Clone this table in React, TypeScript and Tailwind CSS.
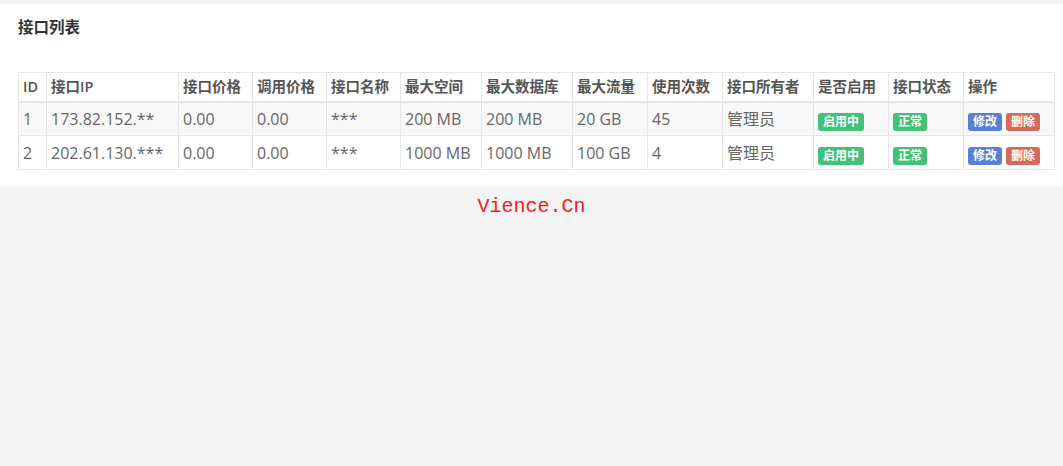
const cols = [
  { label: "ID", w: "w-[28px]" },
  { label: "接口IP", w: "w-[132px]" },
  { label: "接口价格", w: "w-[74px]" },
  { label: "调用价格", w: "w-[74px]" },
  { label: "接口名称", w: "w-[74px]" },
  { label: "最大空间", w: "w-[81px]" },
  { label: "最大数据库", w: "w-[91px]" },
  { label: "最大流量", w: "w-[75px]" },
  { label: "使用次数", w: "w-[75px]" },
  { label: "接口所有者", w: "w-[91px]" },
  { label: "是否启用", w: "w-[75px]" },
  { label: "接口状态", w: "w-[75px]" },
  { label: "操作", w: "w-[91px]" },
];

const rows = [
  ["1", "173.82.152.**", "0.00", "0.00", "***", "200 MB", "200 MB", "20 GB", "45", "管理员"],
  ["2", "202.61.130.***", "0.00", "0.00", "***", "1000 MB", "1000 MB", "100 GB", "4", "管理员"],
];

function Badge({ color, children }: { color: string; children: React.ReactNode }) {
  return (
    <span className={`inline-block rounded-[3px] px-[5px] align-middle text-[12px] leading-[18px] font-bold text-white ${color}`}>
      {children}
    </span>
  );
}

export default function App() {
  return (
    <div
      className="min-h-[466px] bg-[#f3f3f3] pt-[4px]"
      style={{ fontFamily: '"Open Sans", "Noto Sans CJK SC", sans-serif' }}
    >
      <div className="bg-white px-[18px] pt-[12px] pb-[16px]">
        <h2 className="text-[15.5px] leading-[22px] font-bold text-[#333]">接口列表</h2>

        <table className="mt-[34px] w-full table-fixed border-collapse text-[#666]">
          <thead>
            <tr className="h-[29px] border-b-2 border-[#e6e6e6]">
              {cols.map((c) => (
                <th
                  key={c.label}
                  className={`${c.w} border border-[#e6e6e6] px-[4px] text-left text-[14.5px] font-semibold text-[#555]`}
                >
                  {c.label}
                </th>
              ))}
            </tr>
          </thead>
          <tbody>
            {rows.map((r, i) => (
              <tr key={r[0]} className={`h-[34px] ${i === 0 ? "bg-[#f8f8f8]" : "bg-white"}`}>
                {r.map((v, j) => (
                  <td key={j} className="border border-[#e6e6e6] px-[4px] text-[16px] text-[#666]">
                    {v}
                  </td>
                ))}
                <td className="border border-[#e6e6e6] px-[4px] pt-[3px]">
                  <Badge color="bg-[#41c274]">启用中</Badge>
                </td>
                <td className="border border-[#e6e6e6] px-[4px] pt-[3px]">
                  <Badge color="bg-[#41c274]">正常</Badge>
                </td>
                <td className="border border-[#e6e6e6] px-[4px] pt-[3px]">
                  <span className="inline-flex gap-[4px] align-middle">
                    <Badge color="bg-[#5b7fd6]">修改</Badge>
                    <Badge color="bg-[#d6695b]">删除</Badge>
                  </span>
                </td>
              </tr>
            ))}
          </tbody>
        </table>
      </div>

      <div
        className="mt-[8px] text-center text-[20px] leading-[26px] text-[#f51c1c]"
        style={{ fontFamily: '"Liberation Mono", monospace' }}
      >
        Vience.Cn
      </div>
    </div>
  );
}
